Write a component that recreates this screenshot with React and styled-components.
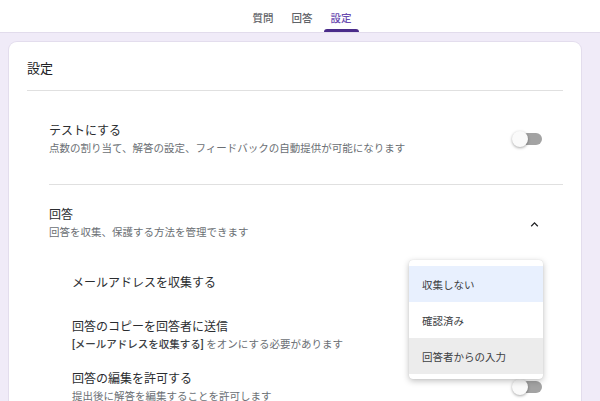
import styled, { createGlobalStyle } from 'styled-components';

const GlobalStyle = createGlobalStyle`
  body {
    margin: 0;
    background: #f0ebf8;
    font-family: Roboto, "Noto Sans CJK JP", sans-serif;
    color: #202124;
  }
`;

const Page = styled.div`
  height: 401px;
  overflow: hidden;
`;

const Header = styled.div`
  height: 32px;
  background: #fff;
  display: flex;
  justify-content: center;
  gap: 4px;
  padding-left: 4px;
  box-shadow: 0 1px 0 #e2dcec;
  position: relative;
  z-index: 1;
`;

const Tab = styled.div`
  position: relative;
  padding: 3px 7px 0;
  display: flex;
  align-items: center;
  font-size: 10.5px;
  font-weight: 500;
  color: ${(p) => (p.$active ? '#6a4bb0' : '#5f6368')};

  &::after {
    content: '';
    position: absolute;
    left: 0;
    right: 0;
    bottom: 0;
    height: 3px;
    border-radius: 3px 3px 0 0;
    background: ${(p) => (p.$active ? '#4a2c8a' : 'transparent')};
  }
`;

const Main = styled.div`
  padding: 10px 0 0 9px;
`;

const Card = styled.div`
  width: 572px;
  background: #fff;
  border-radius: 8px;
  box-shadow: 0 0 0 1px #e3dded;
  padding-bottom: 24px;
`;

const CardTitle = styled.div`
  margin: 0 18px;
  padding: 17px 0 11px;
  font-size: 13px;
  line-height: 20px;
  color: #202124;
  border-bottom: 1px solid #e0e0e0;
`;

const Section = styled.div`
  margin: 0 18px 0 40px;
`;

const Row = styled.div`
  display: flex;
  align-items: center;
  justify-content: space-between;
  padding: ${(p) => p.$pad};
  padding-right: 21px;
  border-bottom: ${(p) => (p.$divider ? '1px solid #e0e0e0' : 'none')};
`;

const SubList = styled.div`
  padding: 0 21px 0 23px;
`;

const SubRow = styled.div`
  position: relative;
  display: flex;
  align-items: center;
  justify-content: space-between;
  padding: ${(p) => p.$pad};
`;

const Texts = styled.div`
  display: flex;
  flex-direction: column;
`;

const Title = styled.div`
  font-size: 12px;
  line-height: 20px;
  color: #2b2d30;
`;

const Desc = styled.div`
  font-size: 10.5px;
  line-height: 16px;
  color: #6b6f74;
`;

const Strong = styled.span`
  font-weight: 500;
  color: #3c4043;
`;

const Switch = styled.div`
  position: relative;
  width: 30px;
  height: 16px;
  flex-shrink: 0;
`;

const Track = styled.div`
  position: absolute;
  left: 2px;
  right: 0;
  top: 2px;
  height: 12px;
  border-radius: 6px;
  background: #a3a3a3;
`;

const Thumb = styled.div`
  position: absolute;
  left: 0;
  top: 0;
  width: 16px;
  height: 16px;
  border-radius: 50%;
  background: #fafafa;
  box-shadow: 0 1px 3px rgba(0, 0, 0, 0.35);
`;

const Chevron = styled.svg`
  width: 15px;
  height: 15px;
  fill: #202124;
  flex-shrink: 0;
  margin-bottom: -3px;
`;

const Menu = styled.div`
  position: absolute;
  top: 19px;
  right: -1px;
  width: 134px;
  padding: 6px 0 5px;
  background: #fff;
  border-radius: 4px;
  box-shadow: 0 2px 6px rgba(0, 0, 0, 0.25), 0 0 1px rgba(0, 0, 0, 0.15);
  z-index: 2;
`;

const MenuItem = styled.div`
  height: 36px;
  display: flex;
  align-items: center;
  padding-left: 13px;
  font-size: 10.5px;
  color: #3c4043;
  background: ${(p) =>
    p.$tone === 'selected' ? '#e8f0fe' : p.$tone === 'hover' ? '#ececec' : '#fff'};
`;

const Toggle = () => (
  <Switch>
    <Track />
    <Thumb />
  </Switch>
);

const App = () => {
  return (
    <Page>
      <GlobalStyle />
      <Header>
        <Tab>質問</Tab>
        <Tab>回答</Tab>
        <Tab $active>設定</Tab>
      </Header>
      <Main>
        <Card>
          <CardTitle>設定</CardTitle>
          <Section>
            <Row $pad="30px 0 27px" $divider>
              <Texts>
                <Title>テストにする</Title>
                <Desc>点数の割り当て、解答の設定、フィードバックの自動提供が可能になります</Desc>
              </Texts>
              <Toggle />
            </Row>
            <Row $pad="20px 0 0">
              <Texts>
                <Title>回答</Title>
                <Desc>回答を収集、保護する方法を管理できます</Desc>
              </Texts>
              <Chevron viewBox="0 0 24 24">
                <path d="M12 8l-6 6 1.41 1.41L12 10.83l4.59 4.58L18 14z" />
              </Chevron>
            </Row>
            <SubList>
              <SubRow $pad="32px 0 24px">
                <Title>メールアドレスを収集する</Title>
                <Menu>
                  <MenuItem $tone="selected">収集しない</MenuItem>
                  <MenuItem>確認済み</MenuItem>
                  <MenuItem $tone="hover">回答者からの入力</MenuItem>
                </Menu>
              </SubRow>
              <SubRow $pad="0 0 16px">
                <Texts>
                  <Title>回答のコピーを回答者に送信</Title>
                  <Desc>
                    <Strong>[メールアドレスを収集する]</Strong> をオンにする必要があります
                  </Desc>
                </Texts>
              </SubRow>
              <SubRow $pad="0">
                <Texts>
                  <Title>回答の編集を許可する</Title>
                  <Desc>提出後に解答を編集することを許可します</Desc>
                </Texts>
                <Toggle />
              </SubRow>
            </SubList>
          </Section>
        </Card>
      </Main>
    </Page>
  );
};

export default App;
